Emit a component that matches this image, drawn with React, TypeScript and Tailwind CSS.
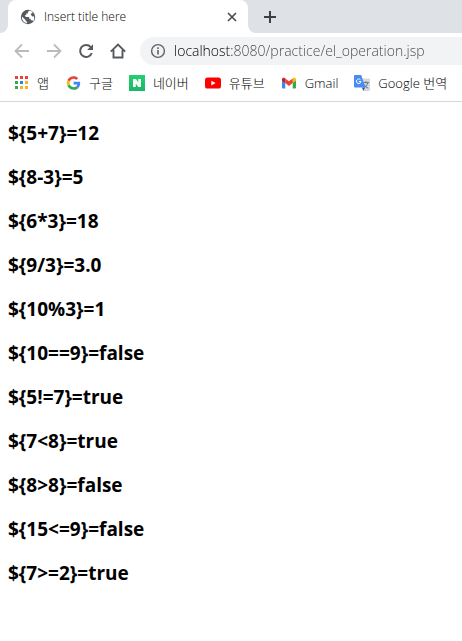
import React from 'react';

type IconProps = { className?: string };

const GlobeIcon = ({ className }: IconProps) => (
  <svg viewBox="0 0 16 16" className={className} aria-hidden="true">
    <circle cx="8" cy="8" r="7.2" fill="#55595e" />
    <path
      d="M9.6 1.6 7.9 3v1.6H6.2v1.7H4.6L5.9 8h3.2v1.7h1.6v1.5h1.7l.9 1.2A6.6 6.6 0 0 0 14 7.2l-1.6.4-1.5-1.8V4.5h1.3l.4-1.3a6 6 0 0 0-3-1.6ZM1.9 7.4l3.9 3.8v1.4h1.3v1.7A6.2 6.2 0 0 1 1.9 7.4Z"
      fill="#fff"
    />
  </svg>
);

const AppsIcon = ({ className }: IconProps) => (
  <svg viewBox="0 0 16 16" className={className} aria-hidden="true" shapeRendering="crispEdges">
    <path d="M2 1h3v3H2zM7 1h3v3H7zM12 1h3v3h-3z" fill="#ea4335" />
    <path d="M2 6h3v3H2zM2 11h3v3H2z" fill="#34a853" />
    <path d="M7 6h3v3H7z" fill="#1e88e5" />
    <path d="M12 6h3v3h-3zM7 11h3v3H7zM12 11h3v3h-3z" fill="#fbb020" />
  </svg>
);

const GoogleIcon = ({ className }: IconProps) => (
  <svg viewBox="-6 -4 56 56" className={className} aria-hidden="true">
    <path fill="#EA4335" d="M24 9.5c3.54 0 6.71 1.22 9.21 3.6l6.85-6.85C35.9 2.38 30.47 0 24 0 14.62 0 6.51 5.38 2.56 13.22l7.98 6.19C12.43 13.72 17.74 9.5 24 9.5z" />
    <path fill="#4285F4" d="M46.98 24.55c0-1.57-.15-3.09-.38-4.55H24v9.02h12.94c-.58 2.96-2.26 5.48-4.78 7.18l7.73 6c4.51-4.18 7.09-10.36 7.09-17.65z" />
    <path fill="#FBBC05" d="M10.53 28.59a14.5 14.5 0 0 1 0-9.18l-7.98-6.19a24 24 0 0 0 0 21.56l7.98-6.19z" />
    <path fill="#34A853" d="M24 48c6.48 0 11.93-2.13 15.89-5.81l-7.73-6c-2.15 1.45-4.92 2.3-8.16 2.3-6.26 0-11.57-4.22-13.47-9.91l-7.98 6.19C6.51 42.62 14.62 48 24 48z" />
  </svg>
);

const NaverIcon = ({ className }: IconProps) => (
  <svg viewBox="0 0 16 16" className={className} aria-hidden="true">
    <defs>
      <linearGradient id="naver" x1="0" y1="0" x2="0" y2="1">
        <stop offset="0" stopColor="#22d070" />
        <stop offset="1" stopColor="#19b765" />
      </linearGradient>
    </defs>
    <path d="M0 0h16v16H0z" fill="url(#naver)" />
    <path d="M4 4h3l2.3 3.6V4H12v8H9.2L6.8 8.4V12H4z" fill="#fff" />
  </svg>
);

const YoutubeIcon = ({ className }: IconProps) => (
  <svg viewBox="0 0 16 16" className={className} aria-hidden="true">
    <rect x="0" y="2.5" width="16" height="11" rx="2.6" fill="#f00" />
    <path d="m6.3 5.7 4.3 2.4-4.3 2.4z" fill="#fff" />
  </svg>
);

const GmailIcon = ({ className }: IconProps) => (
  <svg viewBox="0 0 16 16" className={className} aria-hidden="true">
    <path d="M1 4.5v8c0 .6.4 1 1 1h2.3V6.5z" fill="#4285f4" />
    <path d="M15 4.5v8c0 .6-.4 1-1 1h-2.3V6.5z" fill="#34a853" />
    <path d="M11.7 3.5v4.6L15 5.7V4.3c0-1.5-1.6-2.1-2.7-1.3z" fill="#fbbc04" />
    <path d="M4.3 8.1V3.5L8 6.3l3.7-2.8v4.6L8 10.9z" fill="#ea4335" />
    <path d="M1 4.3v1.4l3.3 2.4V3.5L3.7 3C2.6 2.2 1 2.8 1 4.3z" fill="#c5221f" />
  </svg>
);

const TranslateIcon = ({ className }: IconProps) => (
  <svg viewBox="0 0 16 16" className={className} aria-hidden="true">
    <path d="M6 3.5h9a1 1 0 0 1 1 1V15a1 1 0 0 1-1 1H9.5z" fill="#d5d7da" />
    <path d="M8.8 7.6H15M11.9 6.2v1.4M13.8 7.8c-.5 2.2-2 4.2-3.8 5.2M10 9.2c.9 1.8 2.3 3 4.2 4" fill="none" stroke="#607988" strokeWidth="1" />
    <path d="M8 12.5h3.3L9.2 16z" fill="#3057b5" />
    <path d="M1 0h6.2l4.1 12.5H1a1 1 0 0 1-1-1V1a1 1 0 0 1 1-1z" fill="#4a8af4" />
    <path d="M6.4 4.7A2.3 2.3 0 1 0 7 6.6H4.8" fill="none" stroke="#fff" strokeWidth="1" />
  </svg>
);

const bookmarks = [
  { label: '앱', Icon: AppsIcon },
  { label: '구글', Icon: GoogleIcon },
  { label: '네이버', Icon: NaverIcon },
  { label: '유튜브', Icon: YoutubeIcon },
  { label: 'Gmail', Icon: GmailIcon },
  { label: 'Google 번역', Icon: TranslateIcon },
];

const results = [
  '${5+7}=12',
  '${8-3}=5',
  '${6*3}=18',
  '${9/3}=3.0',
  '${10%3}=1',
  '${10==9}=false',
  '${5!=7}=true',
  '${7<8}=true',
  '${8>8}=false',
  '${15<=9}=false',
  '${7>=2}=true',
];

const TabStrip = () => (
  <div className="flex h-[33px] bg-white">
    <div className="w-2 shrink-0 rounded-br-lg bg-[#dee1e6]" />
    {/* grey behind the tab shows through its rounded top corners */}
    <div className="w-60 shrink-0 bg-linear-to-b from-[#dee1e6] from-50% to-white to-50%">
      <div className="flex h-full items-center rounded-t-lg bg-white pr-2 pl-3">
        <GlobeIcon className="size-4 shrink-0" />
        <span className="ml-2 flex-1 text-xs font-light text-black">Insert title here</span>
        <button type="button" aria-label="Close tab" className="flex size-4 items-center justify-center">
          <svg viewBox="0 0 16 16" className="size-4">
            <path d="m4 4 8 8M12 4l-8 8" stroke="#494c50" strokeWidth="1.7" />
          </svg>
        </button>
      </div>
    </div>
    <div className="flex flex-1 items-center rounded-bl-lg bg-[#dee1e6] pl-3.5">
      <button type="button" aria-label="New tab" className="size-4">
        <svg viewBox="0 0 16 16" className="size-4">
          <path d="M8 2v12M2 8h12" stroke="#3c4043" strokeWidth="2" />
        </svg>
      </button>
    </div>
  </div>
);

const Toolbar = () => (
  <div className="flex items-center py-1 pl-3.5">
    <div className="flex shrink-0 gap-4">
      <button type="button" aria-label="Back" className="size-4">
        <svg viewBox="0 0 16 16" className="size-4">
          <path d="M15 8H2M8 1.5 1.5 8 8 14.5" fill="none" stroke="#b9bbbe" strokeWidth="1.8" />
        </svg>
      </button>
      <button type="button" aria-label="Forward" className="size-4">
        <svg viewBox="0 0 16 16" className="size-4">
          <path d="M1 8h13M8 1.5 14.5 8 8 14.5" fill="none" stroke="#b9bbbe" strokeWidth="1.8" />
        </svg>
      </button>
      <button type="button" aria-label="Reload" className="size-4">
        <svg viewBox="0 0 16 16" className="size-4">
          <path d="M13.8 10A6 6 0 1 1 12.6 3.9" fill="none" stroke="#55595e" strokeWidth="2" />
          <path d="M15 1.2v5.9H9.1z" fill="#55595e" />
        </svg>
      </button>
      <button type="button" aria-label="Home" className="size-4">
        <svg viewBox="0 0 16 16" className="size-4">
          <path d="M.8 8.6 8 1.5l7.2 7.1M3.5 7v7.5h9V7" fill="none" stroke="#55595e" strokeWidth="1.9" />
        </svg>
      </button>
    </div>
    <div className="ml-3.5 flex h-7 min-w-0 flex-1 items-center rounded-l-full bg-[#f1f3f4] pl-2.5">
      <svg viewBox="0 0 16 16" className="size-4 shrink-0" aria-hidden="true">
        <circle cx="8" cy="8" r="6.4" fill="none" stroke="#5f6368" strokeWidth="1.4" />
        <path d="M8 7v4.5M8 4.3v1.6" stroke="#5f6368" strokeWidth="1.6" />
      </svg>
      {/* host part is darker than the rest of the address */}
      <input
        type="text"
        aria-label="Address"
        defaultValue="localhost:8080/practice/el_operation.jsp"
        className="ml-2 min-w-0 flex-1 bg-linear-to-r from-black from-[58px] to-[#44474b] to-[58px] bg-clip-text text-sm font-light text-transparent outline-none"
      />
    </div>
  </div>
);

const BookmarkBar = () => (
  <nav className="flex h-[33px] items-center gap-4 overflow-hidden border-b border-[#d5d7da] pb-1 pl-[13px]">
    {bookmarks.map(({ label, Icon }) => (
      <a key={label} href="#" className="flex shrink-0 items-center gap-2 text-[13px] leading-4 font-light whitespace-nowrap text-black">
        <Icon className="size-4" />
        {label}
      </a>
    ))}
  </nav>
);

const App: React.FC = () => {
  return (
    <div className="min-h-screen bg-white font-['Open_Sans','Noto_Sans_CJK_KR',sans-serif]">
      <header>
        <TabStrip />
        <Toolbar />
        <BookmarkBar />
      </header>
      <main className="flex flex-col gap-5 px-2 pt-[19px] pb-5 text-[19px] leading-6 font-bold text-black">
        {results.map((line) => (
          <h3 key={line}>{line}</h3>
        ))}
      </main>
    </div>
  );
};

export default App;
